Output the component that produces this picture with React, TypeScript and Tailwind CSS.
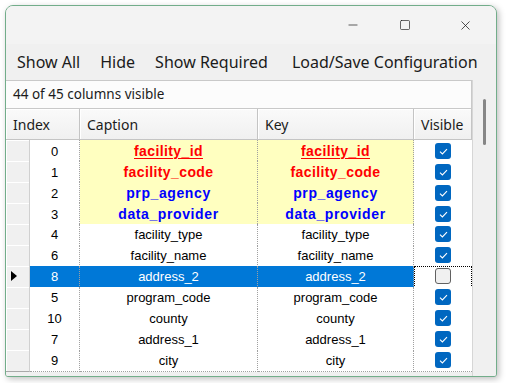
import { Minus, Square, X } from "lucide-react";

type Row = {
  index: number;
  name: string;
  kind?: "red" | "redUnderline" | "blue";
  visible: boolean;
  selected?: boolean;
};

const rows: Row[] = [
  { index: 0, name: "facility_id", kind: "redUnderline", visible: true },
  { index: 1, name: "facility_code", kind: "red", visible: true },
  { index: 2, name: "prp_agency", kind: "blue", visible: true },
  { index: 3, name: "data_provider", kind: "blue", visible: true },
  { index: 4, name: "facility_type", visible: true },
  { index: 6, name: "facility_name", visible: true },
  { index: 8, name: "address_2", visible: false, selected: true },
  { index: 5, name: "program_code", visible: true },
  { index: 10, name: "county", visible: true },
  { index: 7, name: "address_1", visible: true },
  { index: 9, name: "city", visible: true },
];

const uiFont = "font-['Segoe_UI','Noto_Sans',sans-serif]";
const cellFont = "font-['Liberation_Sans',Arial,sans-serif]";

function CheckBox({ checked }: { checked: boolean }) {
  if (!checked)
    return (
      <span className="block w-[16px] h-[16px] rounded-[3px] border border-[#616161] bg-[#f0f0f0]" />
    );
  return (
    <span className="flex items-center justify-center w-[16px] h-[16px] rounded-[3px] bg-[#0067c0]">
      <svg width="9" height="7" viewBox="0 0 9 7" fill="none">
        <path d="M1 3.6 L3.4 6 L8 1.2" stroke="white" strokeWidth="1.1" />
      </svg>
    </span>
  );
}

function captionClass(row: Row) {
  if (row.selected) return `${cellFont} text-[13px] text-white`;
  if (row.kind === "redUnderline")
    return `${cellFont} text-[14px] font-bold tracking-[0.4px] text-[#ff0000] underline underline-offset-2`;
  if (row.kind === "red")
    return `${cellFont} text-[14px] font-bold tracking-[0.4px] text-[#ff0000]`;
  if (row.kind === "blue")
    return `${cellFont} text-[14px] font-bold tracking-[0.6px] text-[#0000ff]`;
  return `${cellFont} text-[13px] text-black`;
}

export default function App() {
  return (
    <div className="w-[506px] h-[383px] bg-white pl-[5px] pt-[5px]">
      <div className="w-[492px] h-[372px] border border-[#72ad8a] rounded-tl-[8px] rounded-tr-[8px] rounded-b-[3px] overflow-hidden flex flex-col bg-[#f0f0f0] shadow-[2px_2px_6px_rgba(0,0,0,0.25)]">
        {/* Title bar */}
        <div className="h-[38px] bg-[#f3f3f3] flex justify-end items-center text-[#1a1a1a]">
          <div className="w-[46px] flex justify-center">
            <Minus size={14} strokeWidth={1.2} />
          </div>
          <div className="w-[50px] ml-[4px] flex justify-center">
            <Square size={12} strokeWidth={1.3} />
          </div>
          <div className="w-[46px] ml-[12px] mr-[8px] flex justify-center">
            <X size={15} strokeWidth={1.2} />
          </div>
        </div>

        {/* Menu */}
        <div
          className={`h-[36px] flex items-center pl-[11px] text-[16px] text-[#1b1b1b] ${uiFont}`}
        >
          <span>Show All</span>
          <span className="ml-[20px]">Hide</span>
          <span className="ml-[20px]">Show Required</span>
          <span className="ml-[24px]">Load/Save Configuration</span>
        </div>

        <div className="flex flex-1 min-h-0">
          <div className="w-[466px] flex flex-col">
            {/* Status */}
            <div
              className={`h-[29px] bg-[#fcfcfc] border border-[#c9c9c9] border-l-0 flex items-center pl-[7px] text-[13.5px] text-[#1b1b1b] ${uiFont}`}
            >
              44 of 45 columns visible
            </div>

            {/* Grid */}
            <div className="flex-1 bg-[#f0f0f0]">
              <div
                className={`grid grid-cols-[74px_178px_156px_58px] h-[31px] text-[14px] text-[#1b1b1b] ${uiFont}`}
              >
                {["Index", "Caption", "Key", "Visible"].map((h) => (
                  <div
                    key={h}
                    className="flex items-center pl-[7px] bg-gradient-to-b from-[#fafafa] to-[#f0f0f0] border-r border-b border-[#c4c4c4] shadow-[inset_1px_1px_0_#ffffff]"
                  >
                    {h}
                  </div>
                ))}
              </div>
              {rows.map((r) => {
                const yellow = !!r.kind;
                const data = r.selected
                  ? "bg-[#0078d7]"
                  : yellow
                  ? "bg-[#ffffc0]"
                  : "bg-white";
                return (
                  <div
                    key={r.index}
                    className="grid grid-cols-[24px_50px_178px_156px_58px] h-[21px]"
                  >
                    <div className="flex items-center pl-[5px] bg-[#f0f0f0] border-b border-[#a9a9a9] border-r border-r-[#d0d0d0] shadow-[inset_1px_1px_0_#ffffff]">
                      {r.selected && (
                        <svg width="6" height="10" viewBox="0 0 6 10">
                          <path d="M0 0 L6 5 L0 10 Z" fill="black" />
                        </svg>
                      )}
                    </div>
                    <div
                      className={`flex items-center justify-center pt-px border-r border-b border-dotted border-[#a0a0a0] text-[13px] ${cellFont} ${
                        r.selected ? "bg-[#0078d7] text-white" : "bg-white text-black"
                      }`}
                    >
                      {r.index}
                    </div>
                    <div
                      className={`flex items-center justify-center pt-px border-r border-b border-dotted border-[#a0a0a0] ${data}`}
                    >
                      <span className={captionClass(r)}>{r.name}</span>
                    </div>
                    <div
                      className={`flex items-center justify-center pt-px border-r border-b border-dotted border-[#a0a0a0] ${data}`}
                    >
                      <span className={captionClass(r)}>{r.name}</span>
                    </div>
                    <div
                      className={`flex items-center justify-center bg-white border-b border-dotted border-[#a0a0a0] ${
                        r.selected ? "outline outline-1 outline-dotted outline-black -outline-offset-1" : ""
                      }`}
                    >
                      <CheckBox checked={r.visible} />
                    </div>
                  </div>
                );
              })}
            </div>
          </div>

          {/* Scrollbar */}
          <div className="flex-1 border-l border-[#d6d6d6] bg-[#f0f0f0] flex justify-center pt-[19px]">
            <div className="w-[3px] h-[46px] rounded-full bg-[#868686]" />
          </div>
        </div>
      </div>
    </div>
  );
}
